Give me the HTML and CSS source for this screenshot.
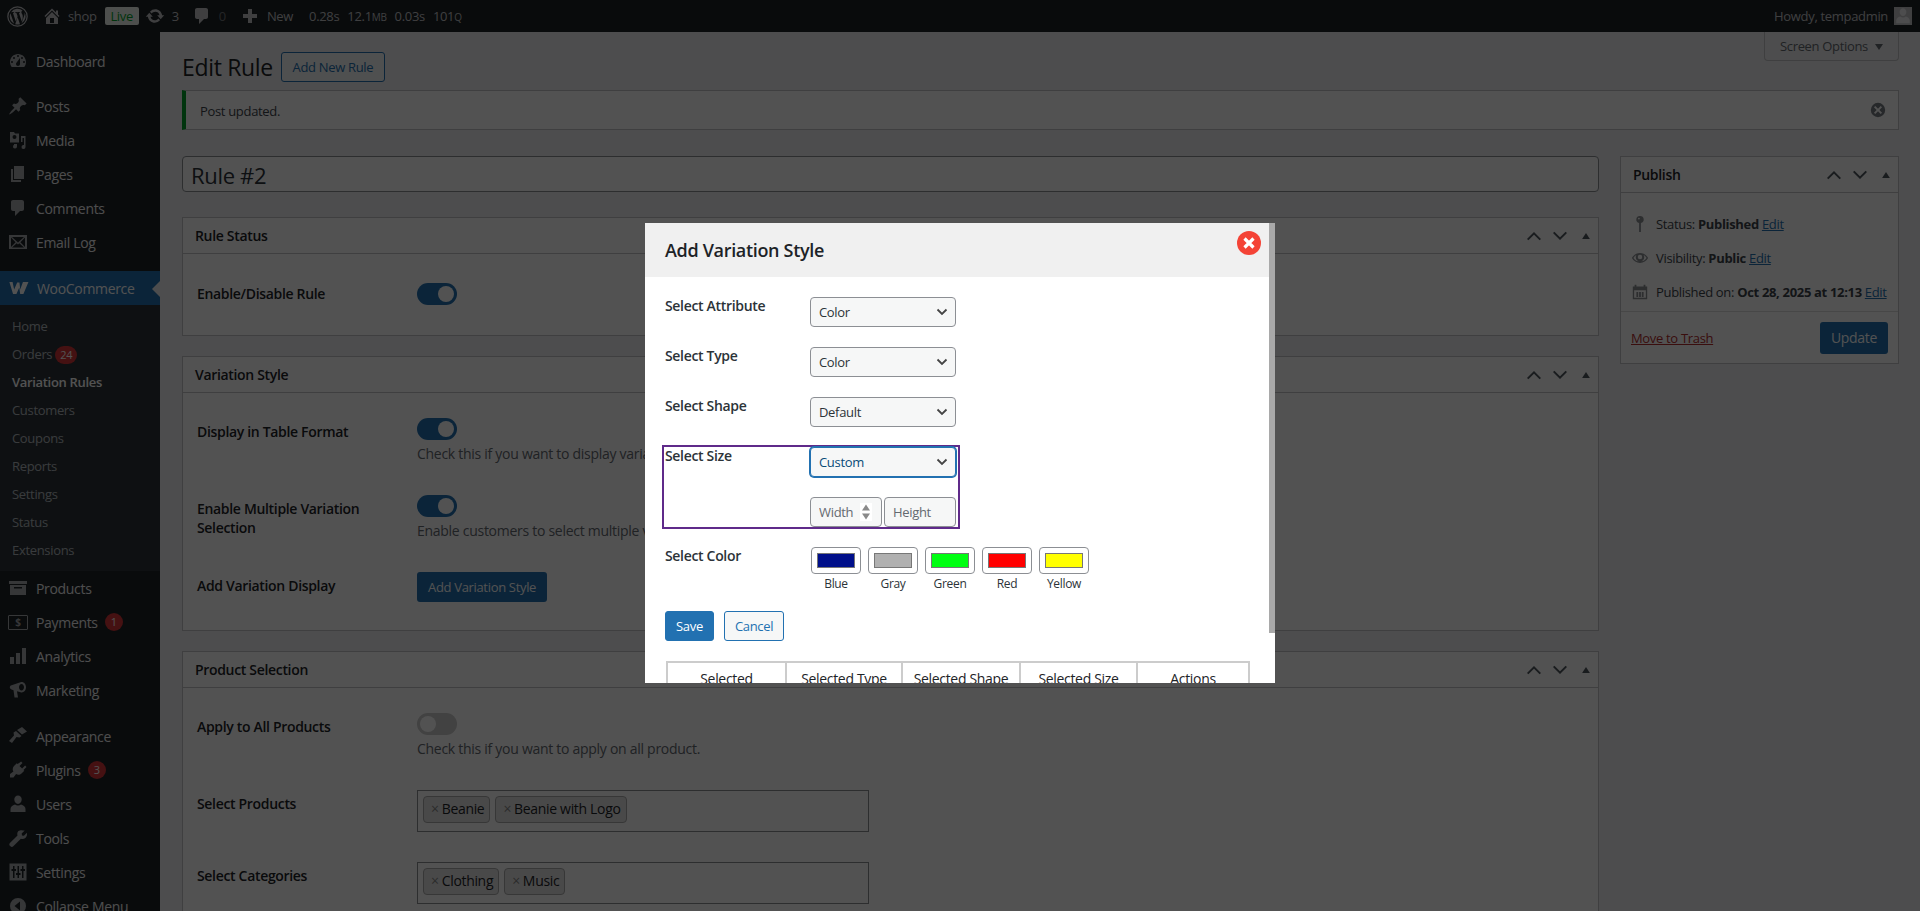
FILE: index.html
```html
<!DOCTYPE html>
<html lang="en">
<head>
    <meta charset="UTF-8">
    <title>Edit Rule</title>
    <link rel="stylesheet" href="styles.css">
</head>
<body>
    <svg class="sprite" width="0" height="0">
        <symbol id="i-wp" viewBox="0 0 20 20"><circle cx="10" cy="10" r="9.2" fill="none" stroke="currentColor" stroke-width="1.2"/><path d="M2.6 10c0 2.9 1.7 5.4 4.1 6.6L3.2 7A7.4 7.4 0 0 0 2.6 10zm12.4-.4c0-.9-.3-1.5-.6-2-.4-.6-.7-1.100-.7-1.700 0-.7.500-1.300 1.200-1.300h.1A7.400 7.400 0 0 0 3.900 5.900h.5c.8 0 2-.1 2-.1.400 0 .5.600.1.600 0 0-.4.100-.9.100l2.800 8.300 1.700-5-1.200-3.300c-.4 0-.8-.1-.8-.1-.4 0-.4-.6 0-.6 0 0 1.300.1 2 .1.800 0 2-.1 2-.1.400 0 .5.600.1.600 0 0-.4.100-.9.100l2.800 8.200.8-2.600c.1-.9.100-1.700.100-2.500zM10.100 10.700l-2.300 6.700a7.400 7.400 0 0 0 4.600-.1L10.100 10.700zM16.700 6.300l.1.800c0 .8-.1 1.600-.6 2.700l-2.300 6.600a7.400 7.400 0 0 0 2.800-10.100z"/></symbol>
        <symbol id="i-home" viewBox="0 0 20 20"><path d="M16 8.500l1.530 1.530-1.060 1.060L10 4.620l-6.470 6.470-1.060-1.060L10 2.500l4 4v-2h2v4zm-6-2.460l6 5.990V18H4v-5.970zM12 17v-5H8v5h4z"/></symbol>
        <symbol id="i-update" viewBox="0 0 20 20"><path d="M10.200 3.280c3.530 0 6.430 2.610 6.920 6h2.080l-3.500 4-3.500-4h2.320a4.440 4.440 0 0 0-4.320-3.440c-1.450 0-2.730.710-3.540 1.780L4.950 5.660a7 7 0 0 1 5.250-2.380zm-.400 13.440c-3.520 0-6.430-2.610-6.920-6H.800l3.500-4c1.170 1.330 2.330 2.670 3.500 4H5.480a4.440 4.440 0 0 0 4.320 3.440c1.450 0 2.730-.710 3.540-1.780l1.710 1.950a7 7 0 0 1-5.250 2.390z"/></symbol>
        <symbol id="i-comment" viewBox="0 0 20 20"><path d="M5 2h9c1.100 0 2 .9 2 2v7c0 1.100-.9 2-2 2h-2l-5 5v-5H5c-1.100 0-2-.9-2-2V4c0-1.100.9-2 2-2z"/></symbol>
        <symbol id="i-plus" viewBox="0 0 20 20"><path d="M17 8v4h-5v5H8v-5H3V8h5V3h4v5h5z"/></symbol>
        <symbol id="i-dash" viewBox="0 0 20 20"><path d="M3.760 16h12.480c1.100-1.370 1.760-3.110 1.760-5 0-4.420-3.580-8-8-8s-8 3.580-8 8c0 1.890.660 3.630 1.760 5zM10 4a1 1 0 1 1 0 2 1 1 0 0 1 0-2zM6 6a1 1 0 1 1 0 2 1 1 0 0 1 0-2zm8 0a1 1 0 1 1 0 2 1 1 0 0 1 0-2zm-5.370 5.550L12 7v6c0 1.100-.9 2-2 2s-2-.9-2-2c0-.57.240-1.080.630-1.450zM4 10a1 1 0 1 1 0 2 1 1 0 0 1 0-2zm12 0a1 1 0 1 1 0 2 1 1 0 0 1 0-2z"/></symbol>
        <symbol id="i-pin" viewBox="0 0 20 20"><path d="M10.440 3.020l1.820-1.820 6.360 6.350-1.830 1.820c-1.050-.68-2.480-.57-3.410.36l-.75.750c-.92.930-1.040 2.350-.35 3.410l-1.830 1.820-2.410-2.410-2.800 2.790c-.42.420-3.380 2.710-3.800 2.290s1.860-3.390 2.280-3.810l2.790-2.790L4.100 9.360l1.830-1.820c1.050.690 2.480.570 3.400-.36l.75-.750c.930-.920 1.050-2.350.360-3.410z"/></symbol>
        <symbol id="i-media" viewBox="0 0 20 20"><path d="M2 2h4l1 1.500h4v9H2zm4.500 3a2 2 0 1 0 0 4 2 2 0 0 0 0-4zM13 6h4.500v11a2 2 0 1 1-1.500-1.900V8h-1.500v4H13zM6 14h3v2.500a2 2 0 1 1-1.500-1.900V15H6z"/></symbol>
        <symbol id="i-pages" viewBox="0 0 20 20"><path d="M6 15V2h10v13H6zm-1 1h8v2H3V5h2v11z"/></symbol>
        <symbol id="i-mail" viewBox="0 0 20 20"><path d="M1 3h18v14H1zm2 2.500V15l4.600-4.800zM4 5l6 5.500L16 5zm13 .5l-4.600 4.700L17 15zM8.700 11.200L4 15.500h12l-4.700-4.300L10 12.500z" fill-rule="evenodd"/></symbol>
        <symbol id="i-woo" viewBox="0 0 24 16"><path d="M1.500 1.500h3.500l1.700 8 3.300-7.500h2.500l.8 7.500 3-8h6l-5.500 13h-3.500l-1-7-3.100 7H5.500z"/></symbol>
        <symbol id="i-box" viewBox="0 0 20 20"><path d="M1 3h18v3H1zm1 4h16v10H2zm4 2v1.500h8V9z" fill-rule="evenodd"/></symbol>
        <symbol id="i-bars" viewBox="0 0 20 20"><path d="M2 11h4v7H2zm6-4h4v11H8zm6-5h4v16h-4z"/></symbol>
        <symbol id="i-mega" viewBox="0 0 20 20"><path d="M12.500 2.200c2.800-1 5.500 1.500 5.500 5s-2.700 6-5.500 5L9 11.300l1 6.200H6.500l-1-7.300-2-.7C2.400 9.100 1.800 8.200 1.800 7.300s.6-1.800 1.700-2.100zM13.500 4c-1.400 0-2.500 1.500-2.500 3.300s1.100 3.300 2.500 3.300 2.500-1.500 2.500-3.300S14.900 4 13.500 4z" fill-rule="evenodd"/></symbol>
        <symbol id="i-brush" viewBox="0 0 20 20"><path d="M9 4l5-3 5 4.500-5 3zM8 5l5.500 5-2 1.500-3-.5-4.500 6-3-2 5-5.500-.5-3z"/></symbol>
        <symbol id="i-plug" viewBox="0 0 20 20"><path d="M13.100 1.500l1.400 1.400-3 3 2.600 2.600 3-3 1.400 1.400-3 3 .8.800-2.800 2.800c-1.500 1.500-3.800 1.700-5.400.6l-2.600 3.400H2v-3.400l3.400-2.600c-1.100-1.600-.9-3.900.6-5.400l2.800-2.800.8.800z"/></symbol>
        <symbol id="i-user" viewBox="0 0 20 20"><path d="M10 1.500a3.700 3.700 0 0 1 3.700 4c0 2.200-1.600 4.500-3.700 4.500S6.300 7.700 6.300 5.500a3.700 3.700 0 0 1 3.700-4zM7 10.500c.8.700 1.900 1.100 3 1.100s2.200-.4 3-1.100c2.600.5 4.500 2.500 4.500 4.500v3h-15v-3c0-2 1.900-4 4.500-4.500z"/></symbol>
        <symbol id="i-wrench" viewBox="0 0 20 20"><path d="M16.700 2.600l-3 3 .3 1.900 1.900.3 3-3c.4 2-.1 4-1.500 5.100-1.300 1.100-3 1.300-4.500.8L5.300 18.300c-.8.800-2.100.8-2.900 0l-.5-.5c-.8-.8-.8-2 0-2.800l7.600-7.500c-.5-1.500-.2-3.200.9-4.400 1.400-1.300 4.300-1.100 6.300-.5z"/></symbol>
        <symbol id="i-sliders" viewBox="0 0 20 20"><path d="M1.500 1.500h17v17h-17zM5 4v3H3.500v2H5v7h1.500V9H8V7H6.500V4zm4.500 0v7H8v2h1.500v3H11v-3h1.500v-2H11V4zm4.500 0v3h-1.500v2H14v7h1.500V9H17V7h-1.500V4z" fill-rule="evenodd"/></symbol>
        <symbol id="i-collapse" viewBox="0 0 20 20"><path d="M10 2a8 8 0 1 1 0 16 8 8 0 0 1 0-16zm2 3.500L6.500 10l5.500 4.500z" fill-rule="evenodd"/></symbol>
        <symbol id="i-up" viewBox="0 0 20 20"><path d="M3 14L10 7l7 7" fill="none" stroke="currentColor" stroke-width="2.200"/></symbol>
        <symbol id="i-down" viewBox="0 0 20 20"><path d="M3 6l7 7 7-7" fill="none" stroke="currentColor" stroke-width="2.200"/></symbol>
        <symbol id="i-tri" viewBox="0 0 20 20"><path d="M3.500 15L10 5l6.500 10z"/></symbol>
        <symbol id="i-dismiss" viewBox="0 0 20 20"><path d="M10 2a8 8 0 1 1 0 16 8 8 0 0 1 0-16zm3 3.500L10 8.500l-3-3L5.500 7l3 3-3 3L7 14.500l3-3 3 3 1.500-1.500-3-3 3-3z" fill-rule="evenodd"/></symbol>
        <symbol id="i-status" viewBox="0 0 20 20"><path d="M10 1a4 4 0 0 1 1 7.900V19H9V8.900A4 4 0 0 1 10 1zM8.800 3a1 1 0 1 0 0 2 1 1 0 0 0 0-2z" fill-rule="evenodd"/></symbol>
        <symbol id="i-eye" viewBox="0 0 20 20"><path d="M10 4.500c3.900 0 7.200 2.200 9 5.500-1.800 3.300-5.100 5.500-9 5.500S2.800 13.300 1 10c1.800-3.300 5.100-5.500 9-5.500zM6 6.800C4.700 7.400 3.500 8.600 2.700 10c1.600 2.500 4.200 4 7.300 4s5.700-1.500 7.300-4c-.8-1.400-2-2.600-3.300-3.200.4.700.7 1.500.7 2.400a4.700 4.700 0 0 1-9.400 0c0-.9.200-1.700.7-2.400zM10 6.500a2.500 2.500 0 1 0 0 5 2.500 2.500 0 0 0 0-5z" fill-rule="evenodd"/></symbol>
        <symbol id="i-cal" viewBox="0 0 20 20"><path d="M2 4h2V2h2v2h8V2h2v2h2v14H2zm1.500 4v8.500h13V8zM6 10h2v5.500H6zm3 0h2v5.500H9zm3 0h2v5.500h-2z" fill-rule="evenodd"/></symbol>
    </svg>

    <header class="adminbar">
        <div class="bar-left">
            <svg class="bar-logo"><use href="#i-wp"/></svg>
            <svg class="bar-icon home-icon"><use href="#i-home"/></svg>
            <span class="bar-text">shop</span>
            <span class="live-badge">Live</span>
            <svg class="bar-icon update-icon"><use href="#i-update"/></svg>
            <span class="bar-text">3</span>
            <svg class="bar-icon comment-icon"><use href="#i-comment"/></svg>
            <span class="bar-text bar-zero">0</span>
            <svg class="bar-icon plus-icon"><use href="#i-plus"/></svg>
            <span class="bar-text">New</span>
            <span class="bar-text stat first-stat">0.28s</span>
            <span class="bar-text stat">12.1<small>MB</small></span>
            <span class="bar-text stat">0.03s</span>
            <span class="bar-text stat">101<small>Q</small></span>
        </div>
        <div class="bar-right">
            <span class="bar-text">Howdy, tempadmin</span>
            <span class="avatar"><svg><use href="#i-user"/></svg></span>
        </div>
    </header>

    <div class="layout">
        <nav class="sidebar">
            <ul class="menu">
                <li class="menu-item"><svg><use href="#i-dash"/></svg>Dashboard</li>
                <li class="menu-sep menu-sep-first"></li>
                <li class="menu-item"><svg><use href="#i-pin"/></svg>Posts</li>
                <li class="menu-item"><svg><use href="#i-media"/></svg>Media</li>
                <li class="menu-item"><svg><use href="#i-pages"/></svg>Pages</li>
                <li class="menu-item"><svg><use href="#i-comment"/></svg>Comments</li>
                <li class="menu-item"><svg><use href="#i-mail"/></svg>Email Log</li>
                <li class="menu-sep"></li>
                <li class="menu-item menu-current"><svg class="woo-icon"><use href="#i-woo"/></svg>WooCommerce</li>
                <li>
                    <ul class="submenu">
                        <li>Home</li>
                        <li>Orders <span class="count count-sub">24</span></li>
                        <li class="sub-current">Variation Rules</li>
                        <li>Customers</li>
                        <li>Coupons</li>
                        <li>Reports</li>
                        <li>Settings</li>
                        <li>Status</li>
                        <li>Extensions</li>
                    </ul>
                </li>
                <li class="menu-item"><svg><use href="#i-box"/></svg>Products</li>
                <li class="menu-item"><span class="pay-icon">$</span>Payments <span class="count">1</span></li>
                <li class="menu-item"><svg><use href="#i-bars"/></svg>Analytics</li>
                <li class="menu-item"><svg><use href="#i-mega"/></svg>Marketing</li>
                <li class="menu-sep"></li>
                <li class="menu-item"><svg><use href="#i-brush"/></svg>Appearance</li>
                <li class="menu-item"><svg><use href="#i-plug"/></svg>Plugins <span class="count">3</span></li>
                <li class="menu-item"><svg><use href="#i-user"/></svg>Users</li>
                <li class="menu-item"><svg><use href="#i-wrench"/></svg>Tools</li>
                <li class="menu-item"><svg><use href="#i-sliders"/></svg>Settings</li>
                <li class="menu-item menu-collapse"><svg><use href="#i-collapse"/></svg>Collapse Menu</li>
            </ul>
        </nav>

        <main class="content">
            <button class="screen-options">Screen Options <span class="tri-down"></span></button>
            <div class="page-head">
                <h1>Edit Rule</h1>
                <a class="btn-outline add-new">Add New Rule</a>
            </div>

            <div class="notice">
                <p>Post updated.</p>
                <svg class="notice-close"><use href="#i-dismiss"/></svg>
            </div>

            <div class="columns">
                <div class="col-main">
                    <input class="title-input" type="text" value="Rule #2">

                    <section class="panel">
                        <div class="panel-head">
                            <h2>Rule Status</h2>
                            <span class="panel-arrows"><svg><use href="#i-up"/></svg><svg><use href="#i-down"/></svg><svg class="tri"><use href="#i-tri"/></svg></span>
                        </div>
                        <div class="panel-body">
                            <div class="row row-status">
                                <label>Enable/Disable Rule</label>
                                <div class="field"><span class="toggle on"></span></div>
                            </div>
                        </div>
                    </section>

                    <section class="panel">
                        <div class="panel-head">
                            <h2>Variation Style</h2>
                            <span class="panel-arrows"><svg><use href="#i-up"/></svg><svg><use href="#i-down"/></svg><svg class="tri"><use href="#i-tri"/></svg></span>
                        </div>
                        <div class="panel-body">
                            <div class="row">
                                <label>Display in Table Format</label>
                                <div class="field"><span class="toggle on"></span><p class="hint">Check this if you want to display variations in a table format.</p></div>
                            </div>
                            <div class="row">
                                <label>Enable Multiple Variation Selection</label>
                                <div class="field"><span class="toggle on"></span><p class="hint">Enable customers to select multiple variations at once.</p></div>
                            </div>
                            <div class="row row-last">
                                <label>Add Variation Display</label>
                                <div class="field"><a class="btn-primary">Add Variation Style</a></div>
                            </div>
                        </div>
                    </section>

                    <section class="panel">
                        <div class="panel-head">
                            <h2>Product Selection</h2>
                            <span class="panel-arrows"><svg><use href="#i-up"/></svg><svg><use href="#i-down"/></svg><svg class="tri"><use href="#i-tri"/></svg></span>
                        </div>
                        <div class="panel-body">
                            <div class="row">
                                <label>Apply to All Products</label>
                                <div class="field"><span class="toggle"></span><p class="hint">Check this if you want to apply on all product.</p></div>
                            </div>
                            <div class="row">
                                <label>Select Products</label>
                                <div class="field"><div class="tag-box"><span class="tag"><i>×</i>Beanie</span><span class="tag"><i>×</i>Beanie with Logo</span></div></div>
                            </div>
                            <div class="row">
                                <label>Select Categories</label>
                                <div class="field"><div class="tag-box"><span class="tag"><i>×</i>Clothing</span><span class="tag"><i>×</i>Music</span></div></div>
                            </div>
                        </div>
                    </section>
                </div>

                <aside class="col-side">
                    <section class="panel publish">
                        <div class="panel-head">
                            <h2>Publish</h2>
                            <span class="panel-arrows"><svg><use href="#i-up"/></svg><svg><use href="#i-down"/></svg><svg class="tri"><use href="#i-tri"/></svg></span>
                        </div>
                        <div class="pub-info">
                            <div class="pub-line"><svg><use href="#i-status"/></svg><span>Status: <b>Published</b> <a>Edit</a></span></div>
                            <div class="pub-line"><svg><use href="#i-eye"/></svg><span>Visibility: <b>Public</b> <a>Edit</a></span></div>
                            <div class="pub-line"><svg><use href="#i-cal"/></svg><span>Published on: <b>Oct 28, 2025 at 12:13</b> <a>Edit</a></span></div>
                        </div>
                        <div class="pub-actions">
                            <a class="trash">Move to Trash</a>
                            <a class="btn-primary update">Update</a>
                        </div>
                    </section>
                </aside>
            </div>
        </main>
    </div>

    <div class="overlay"></div>

    <div class="modal">
        <div class="modal-head">
            <h2>Add Variation Style</h2>
            <span class="modal-close"><svg viewBox="0 0 24 24"><path d="M7.500 7.500l9 9m0-9l-9 9" stroke="#fff" stroke-width="3.200" fill="none"/></svg></span>
        </div>
        <div class="modal-body">
            <div class="m-row">
                <label>Select Attribute</label>
                <select class="m-select"><option>Color</option></select>
            </div>
            <div class="m-row">
                <label>Select Type</label>
                <select class="m-select"><option>Color</option></select>
            </div>
            <div class="m-row">
                <label>Select Shape</label>
                <select class="m-select"><option>Default</option></select>
            </div>
            <div class="m-row size-row">
                <label>Select Size</label>
                <div class="size-fields">
                    <select class="m-select focused"><option>Custom</option></select>
                    <div class="size-inputs">
                        <div class="num-field">
                            <input type="text" placeholder="Width">
                            <svg class="spinner" viewBox="0 0 12 18"><path d="M6 1.500l4 6H2zM6 16.500l-4-6h8z"/></svg>
                        </div>
                        <div class="num-field"><input type="text" placeholder="Height"></div>
                    </div>
                </div>
            </div>
            <div class="m-row color-row">
                <label>Select Color</label>
                <div class="swatches">
                    <div class="swatch"><span class="chip"><span class="chip-fill fill-blue"></span></span>Blue</div>
                    <div class="swatch"><span class="chip"><span class="chip-fill fill-gray"></span></span>Gray</div>
                    <div class="swatch"><span class="chip"><span class="chip-fill fill-green"></span></span>Green</div>
                    <div class="swatch"><span class="chip"><span class="chip-fill fill-red"></span></span>Red</div>
                    <div class="swatch"><span class="chip"><span class="chip-fill fill-yellow"></span></span>Yellow</div>
                </div>
            </div>
            <div class="m-actions">
                <a class="m-save">Save</a>
                <a class="m-cancel">Cancel</a>
            </div>
            <table class="m-table">
                <thead>
                    <tr>
                        <th>Selected Attribute</th>
                        <th>Selected Type</th>
                        <th>Selected Shape</th>
                        <th>Selected Size</th>
                        <th>Actions</th>
                    </tr>
                </thead>
            </table>
        </div>
        <div class="m-scroll"><div class="m-thumb"></div></div>
    </div>
</body>
</html>
```

FILE: styles.css
```css
* {
    box-sizing: border-box;
}

html, body {
    height: 100%;
}

body {
    margin: 0;
    font-family: "Open Sans", "Noto Sans", sans-serif;
    font-size: 13px;
    letter-spacing: -0.025em;
    color: #3c434a;
    background-color: #f0f0f1;
    overflow: hidden;
}

.sprite {
    display: block;
    height: 0;
}

svg {
    fill: currentColor;
}

/* top bar */
.adminbar {
    height: 32px;
    background-color: #1d2327;
    color: #c3c4c7;
    display: flex;
    justify-content: space-between;
    align-items: center;
    padding: 0 8px 0 7px;
}

.bar-left, .bar-right {
    display: flex;
    align-items: center;
}

.bar-text {
    font-size: 13px;
    line-height: 32px;
    white-space: nowrap;
}

.bar-text small {
    font-size: 10px;
}

.bar-logo {
    width: 21px;
    height: 21px;
    margin-right: 14px;
}

.bar-icon {
    width: 20px;
    height: 20px;
}

.home-icon {
    margin-right: 6px;
}

.live-badge {
    background-color: #f0f4ee;
    color: #00a32a;
    border-radius: 2px;
    height: 18px;
    line-height: 18px;
    width: 34px;
    text-align: center;
    margin-left: 8px;
    margin-right: 6px;
    font-size: 13px;
}

.update-icon {
    margin-right: 7px;
}

.comment-icon {
    margin-left: 13px;
    margin-right: 7px;
}

.bar-zero {
    opacity: 0.5;
}

.plus-icon {
    margin-left: 14px;
    margin-right: 7px;
}

.stat {
    margin-left: 8px;
}

.first-stat {
    margin-left: 16px;
}

.avatar {
    width: 18px;
    height: 18px;
    margin-left: 6px;
    background-color: #c3c4c7;
    color: #f0f0f1;
    display: flex;
}

.avatar svg {
    width: 18px;
    height: 18px;
}

/* layout */
.layout {
    display: flex;
    height: 879px;
}

.sidebar {
    width: 160px;
    flex-shrink: 0;
    background-color: #1d2327;
    padding-top: 12px;
    overflow: hidden;
}

.menu, .submenu {
    list-style: none;
    margin: 0;
    padding: 0;
}

.menu-item {
    height: 34px;
    display: flex;
    align-items: center;
    font-size: 14px;
    color: #f0f0f1;
    padding-left: 8px;
    white-space: nowrap;
    position: relative;
}

.menu-item > svg {
    width: 20px;
    height: 20px;
    margin-right: 8px;
    color: #a7aaad;
    flex-shrink: 0;
}

.pay-icon {
    width: 20px;
    height: 15px;
    margin-right: 8px;
    flex-shrink: 0;
    border: 1.5px solid #a7aaad;
    border-radius: 1px;
    color: #a7aaad;
    font-size: 10px;
    font-weight: 700;
    line-height: 12px;
    text-align: center;
}

.menu-sep {
    height: 12px;
}

.menu-sep-first {
    height: 11px;
}

.menu-current {
    background-color: #2271b1;
    color: #fff;
}

.menu-current::after {
    content: "";
    position: absolute;
    right: 0;
    top: 10px;
    border: 8px solid transparent;
    border-right-color: #f0f0f1;
    border-left-width: 0;
}

.menu-current .woo-icon {
    color: #fff;
    width: 22px;
    height: 16px;
    margin-right: 7px;
}

.submenu {
    background-color: #2c3338;
    padding: 7px 0;
}

.submenu li {
    height: 28px;
    line-height: 28px;
    padding-left: 12px;
    color: rgba(240, 246, 252, 0.7);
    font-size: 13px;
    white-space: nowrap;
}

.submenu .sub-current {
    color: #fff;
    font-weight: 600;
}

.count {
    display: inline-block;
    min-width: 18px;
    height: 18px;
    line-height: 18px;
    margin-left: 7px;
    padding: 0 5px;
    border-radius: 9px;
    background-color: #d63638;
    color: #fff;
    font-size: 11px;
    text-align: center;
}

.count-sub {
    margin-left: 0;
}

/* content */
.content {
    flex: 1;
    min-width: 0;
    padding: 20px 21px 0 22px;
    color: #3c434a;
}

.screen-options {
    float: right;
    margin-top: -20px;
    height: 29px;
    width: 135px;
    background-color: #f0f0f1;
    border: 1px solid #c3c4c7;
    border-top: none;
    border-radius: 0 0 4px 4px;
    font: inherit;
    letter-spacing: inherit;
    color: #646970;
}

.tri-down {
    display: inline-block;
    margin-left: 4px;
    border: 4px solid transparent;
    border-top: 6px solid #646970;
    border-bottom: 0;
    vertical-align: 1px;
}

.page-head {
    display: flex;
    align-items: center;
    height: 30px;
    margin-bottom: 8px;
}

h1 {
    margin: 0;
    font-size: 23px;
    font-weight: 400;
    color: #1d2327;
}

.btn-outline {
    display: block;
    border: 1px solid #2271b1;
    border-radius: 3px;
    color: #2271b1;
    background-color: #f6f7f7;
}

.add-new {
    margin-left: 8px;
    width: 104px;
    height: 30px;
    line-height: 28px;
    text-align: center;
}

.notice {
    height: 40px;
    background-color: #fff;
    border: 1px solid #c3c4c7;
    border-left: 4px solid #00a32a;
    display: flex;
    align-items: center;
    justify-content: space-between;
    padding: 0 11px 0 14px;
    margin-bottom: 26px;
    clear: both;
}

.notice p {
    margin: 2px 0 0;
}

.notice-close {
    width: 18px;
    height: 18px;
    color: #787c82;
}

.columns {
    display: flex;
    gap: 21px;
    align-items: flex-start;
}

.col-main {
    flex: 1;
    min-width: 0;
}

.col-side {
    width: 279px;
    flex-shrink: 0;
}

.title-input {
    display: block;
    width: 100%;
    height: 36px;
    padding: 1px 8px 0;
    margin-bottom: 25px;
    border: 1px solid #8c8f94;
    border-radius: 4px;
    background-color: #fff;
    font-family: inherit;
    letter-spacing: inherit;
    font-size: 22px;
    color: #2c3338;
}

.panel {
    background-color: #fff;
    border: 1px solid #c3c4c7;
    margin-bottom: 20px;
}

.panel-head {
    height: 36px;
    display: flex;
    align-items: center;
    justify-content: space-between;
    border-bottom: 1px solid #c3c4c7;
    padding: 0 6px 0 12px;
}

.panel-head h2 {
    margin: 0;
    font-size: 14px;
    font-weight: 600;
    color: #1d2327;
}

.panel-arrows {
    display: flex;
    align-items: center;
    gap: 8px;
    color: #50575e;
}

.panel-arrows svg {
    width: 18px;
    height: 18px;
}

.panel-arrows .tri {
    width: 12px;
    height: 12px;
    margin-left: 3px;
}

.panel-body {
    padding: 25px 14px 0 14px;
}

.row {
    display: flex;
    margin-bottom: 30px;
}

.row label {
    width: 220px;
    flex-shrink: 0;
    padding: 4px 30px 0 0;
    font-size: 14px;
    font-weight: 600;
    line-height: 19px;
    color: #1d2327;
}

.field {
    flex: 1;
}

.row-status {
    padding-top: 4px;
}

.row-status label {
    padding-top: 1px;
}

.row-last {
    margin-bottom: 28px;
}

.toggle {
    display: block;
    position: relative;
    width: 40px;
    height: 22px;
    border-radius: 11px;
    background-color: #ccc;
}

.toggle::after {
    content: "";
    position: absolute;
    top: 3px;
    left: 3px;
    width: 16px;
    height: 16px;
    border-radius: 50%;
    background-color: #fff;
}

.toggle.on {
    background-color: #2271b1;
}

.toggle.on::after {
    left: 21px;
}

.hint {
    margin: 3px 0 0;
    line-height: 22px;
    color: #646970;
    font-size: 14px;
    letter-spacing: -0.02em;
}

.btn-primary {
    display: inline-block;
    height: 30px;
    line-height: 30px;
    padding: 0 11px;
    border-radius: 3px;
    background-color: #2271b1;
    color: #fff;
}

.tag-box {
    width: 452px;
    height: 42px;
    border: 1px solid #8c8f94;
    background-color: #fff;
    display: flex;
    gap: 5px;
    padding: 5px;
}

.tag {
    height: 27px;
    line-height: 24px;
    padding: 0 5px 0 7px;
    border: 1px solid #aaa;
    border-radius: 4px;
    background-color: #e4e4e4;
    color: #1d2327;
    font-size: 14px;
}

.tag i {
    font-style: normal;
    color: #888;
    margin-right: 3px;
}

/* publish box */
.publish {
    height: 208px;
}

.pub-info {
    padding-top: 14px;
    border-bottom: 1px solid #dcdcde;
    height: 119px;
}

.pub-line {
    height: 34px;
    display: flex;
    align-items: center;
    padding-left: 10px;
    white-space: nowrap;
    font-size: 13px;
    color: #3c434a;
}

.pub-line svg {
    width: 18px;
    height: 18px;
    margin-right: 7px;
    color: #8c8f94;
    flex-shrink: 0;
}

.pub-line a, .trash {
    text-decoration: underline;
}

.pub-line a {
    color: #2271b1;
}

.pub-actions {
    display: flex;
    justify-content: space-between;
    align-items: center;
    padding: 0 10px;
    height: 52px;
}

.trash {
    color: #b32d2e;
    font-size: 13px;
}

.update {
    width: 68px;
    height: 32px;
    padding: 0;
    line-height: 31px;
    text-align: center;
    font-size: 14px;
}

/* dim layer and dialog */
.overlay {
    position: fixed;
    inset: 0;
    background-color: rgba(0, 0, 0, 0.68);
}

.modal {
    position: fixed;
    left: 645px;
    top: 223px;
    width: 630px;
    height: 460px;
    background-color: #fff;
    overflow: hidden;
    color: #1d2327;
}

.modal-head {
    height: 54px;
    background-color: #f0f0f0;
    display: flex;
    align-items: center;
    padding-left: 20px;
}

.modal-head h2 {
    margin: 0;
    font-size: 18px;
    font-weight: 600;
    color: #1d2327;
}

.modal-close {
    position: absolute;
    left: 592px;
    top: 8px;
    width: 24px;
    height: 24px;
    border-radius: 50%;
    background-color: #f44336;
}

.modal-close svg {
    display: block;
    width: 24px;
    height: 24px;
}

.modal-body {
    padding: 20px 26px 0 20px;
}

.m-row {
    display: flex;
    margin-bottom: 20px;
}

.m-row label {
    width: 145px;
    flex-shrink: 0;
    font-size: 14px;
    font-weight: 600;
    line-height: 20px;
    margin-top: -1px;
    color: #2c3338;
}

.m-select {
    display: block;
    width: 146px;
    height: 30px;
    padding: 0 24px 0 8px;
    border: 1px solid #8c8f94;
    border-radius: 4px;
    background: #f6f7f7 url("data:image/svg+xml,%3Csvg xmlns='http://www.w3.org/2000/svg' width='12' height='8'%3E%3Cpath d='M1.500 1.500l4.500 4.500 4.500-4.500' fill='none' stroke='%23444' stroke-width='1.800'/%3E%3C/svg%3E") no-repeat right 7px center;
    appearance: none;
    font-family: inherit;
    letter-spacing: inherit;
    font-size: 13px;
    color: #2c3338;
}

.m-select.focused {
    border-color: #2271b1;
    box-shadow: 0 0 0 1px #2271b1;
    color: #0a4b78;
}

.size-row {
    width: 298px;
    height: 84px;
    margin: -2px 0 18px -3px;
    padding: 0 0 0 1px;
    border: 2px solid #5f2a8a;
}

.size-inputs {
    display: flex;
    gap: 2px;
    margin-top: 20px;
}

.num-field {
    width: 72px;
    height: 30px;
    display: flex;
    align-items: center;
    border: 1px solid #8c8f94;
    border-radius: 4px;
    background-color: #f6f7f7;
    padding: 0 8px;
}

.num-field input {
    flex: 1;
    min-width: 0;
    border: none;
    background: none;
    padding: 0;
    font-family: inherit;
    letter-spacing: inherit;
    font-size: 13px;
    outline: none;
}

.num-field input::placeholder {
    color: #646970;
    opacity: 1;
}

.spinner {
    width: 12px;
    height: 18px;
    margin-right: 1px;
    background-color: #fff;
    fill: #8a8a8a;
}

.color-row {
    margin-bottom: 19px;
}

.swatches {
    display: flex;
    gap: 7px;
    margin-left: 1px;
}

.swatch {
    width: 50px;
    font-size: 12px;
    line-height: 16px;
    text-align: center;
    color: #2c3338;
}

.chip {
    display: block;
    height: 27px;
    padding: 5px;
    margin-bottom: 2px;
    border: 1px solid #8c8f94;
    border-radius: 4px;
    background-color: #fff;
}

.chip-fill {
    display: block;
    height: 15px;
    border: 1px solid #777;
}

.fill-blue { background-color: #000f8a; }
.fill-gray { background-color: #b0b0b0; }
.fill-green { background-color: #00ff12; }
.fill-red { background-color: #ff0000; }
.fill-yellow { background-color: #ffff00; }

.m-actions {
    display: flex;
    gap: 10px;
    margin-bottom: 20px;
}

.m-save, .m-cancel {
    display: block;
    height: 30px;
    line-height: 28px;
    border: 1px solid #2271b1;
    border-radius: 3px;
    text-align: center;
}

.m-save {
    width: 49px;
    background-color: #2271b1;
    color: #fff;
}

.m-cancel {
    width: 60px;
    background-color: #f6f7f7;
    color: #2271b1;
}

.m-table {
    width: 582px;
    border-collapse: collapse;
    table-layout: fixed;
    border: 2px solid #ccc;
    margin-left: 1px;
}

.m-table th {
    border: 2px solid #ccc;
    padding: 6px 10px;
    font-size: 14px;
    font-weight: 400;
    line-height: 20px;
    text-align: center;
    vertical-align: top;
}

.m-table th:nth-child(1) { width: 119px; }
.m-table th:nth-child(2) { width: 116px; }
.m-table th:nth-child(3) { width: 118px; }
.m-table th:nth-child(4) { width: 117px; }
.m-table th:nth-child(5) { width: 112px; }

.m-scroll {
    position: absolute;
    top: 0;
    right: 0;
    width: 6px;
    height: 100%;
    background-color: #fff;
}

.m-thumb {
    height: 410px;
    background-color: #a9a9a9;
}
```
